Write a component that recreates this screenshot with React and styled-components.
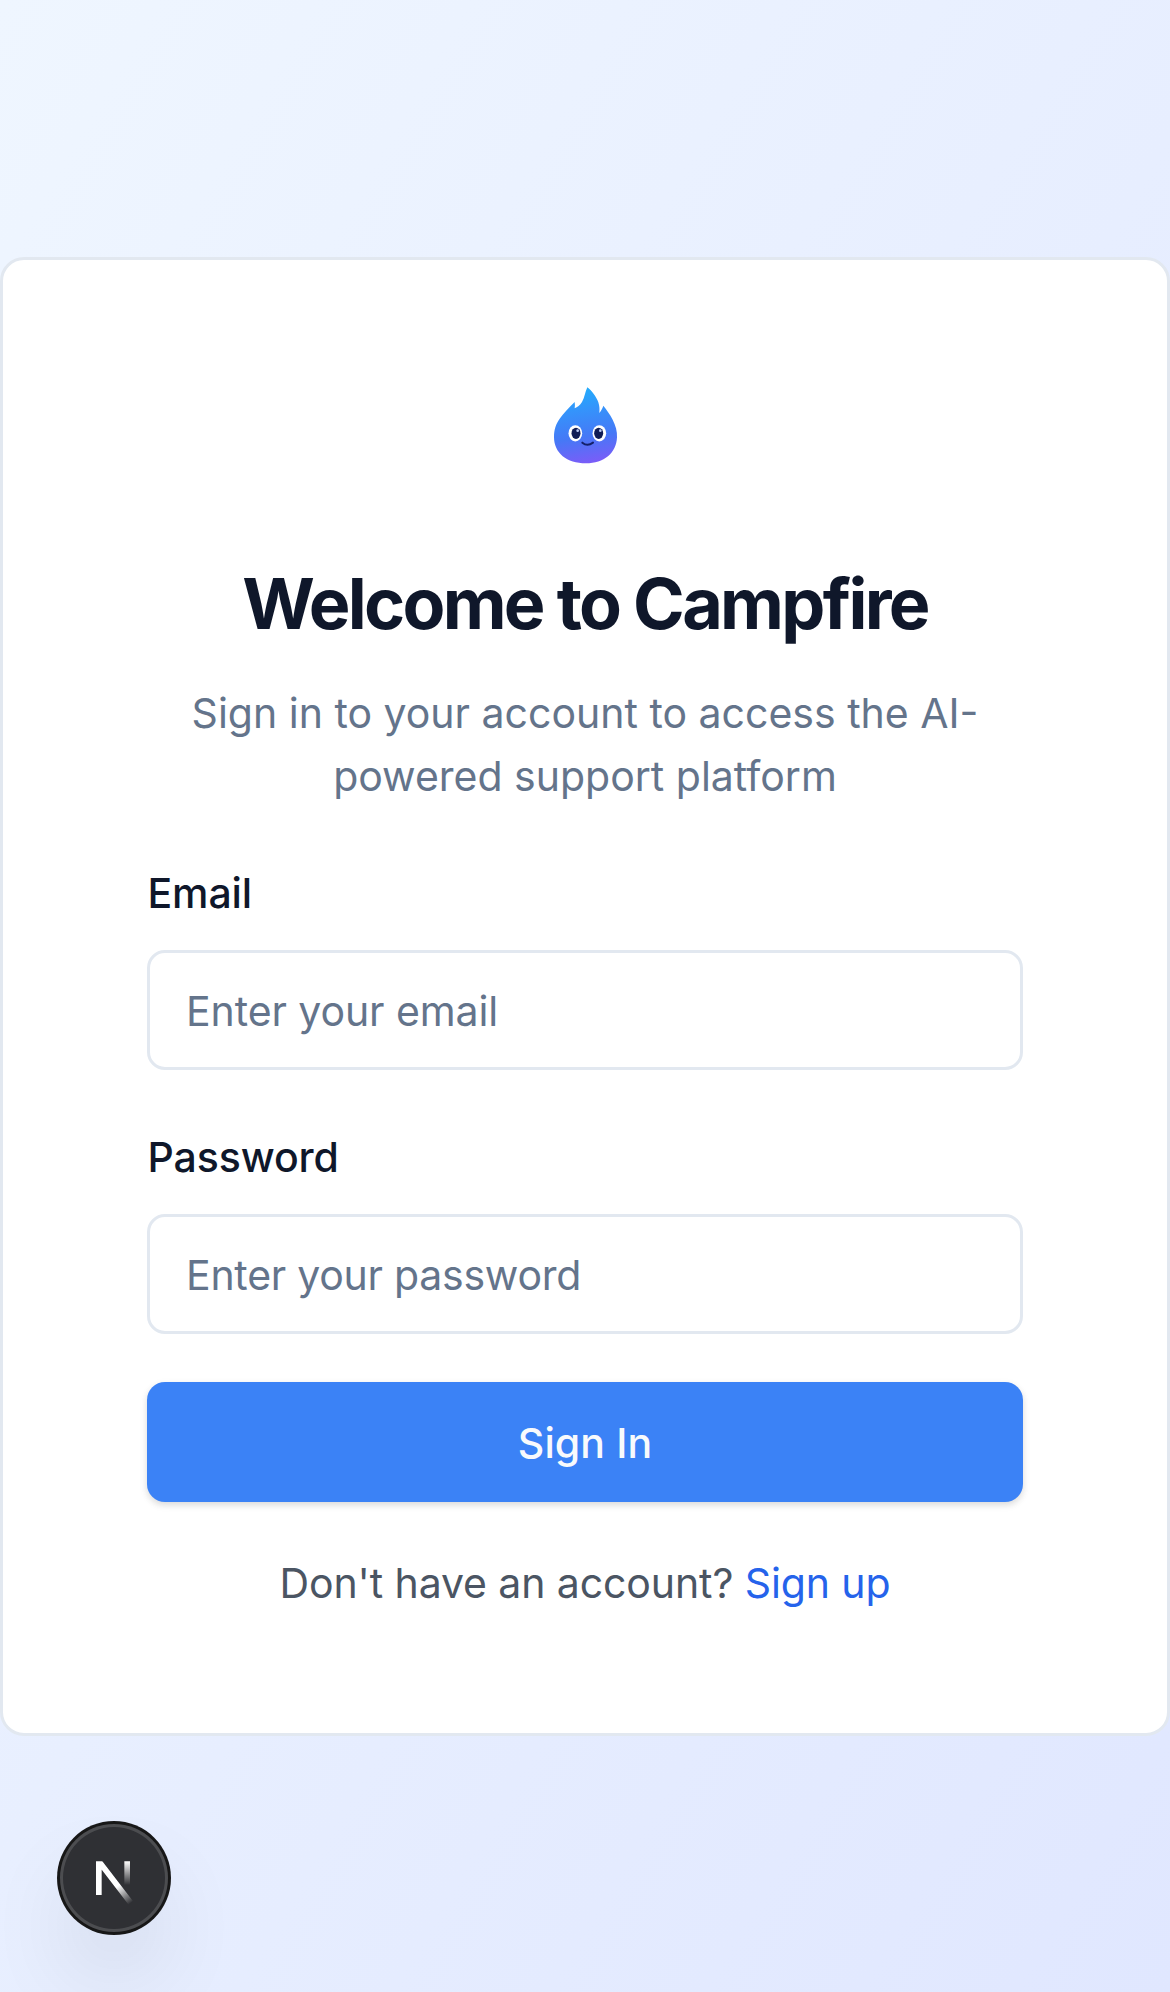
import React from 'react';
import styled, { createGlobalStyle } from 'styled-components';

const GlobalStyle = createGlobalStyle`
  *, *::before, *::after { box-sizing: border-box; }
  body {
    margin: 0;
    font-family: Inter, 'Liberation Sans', sans-serif;
    -webkit-font-smoothing: antialiased;
  }
`;

const Page = styled.main`
  position: relative;
  display: flex;
  align-items: flex-start;
  justify-content: center;
  height: 1992px;
  padding-top: 257px;
  overflow: hidden;
  background: linear-gradient(to bottom right, #eff6ff, #e0e7ff);
`;

const Card = styled.section`
  display: flex;
  flex-direction: column;
  width: 100%;
  height: 1479px;
  padding: 110px 144px 0;
  border: 3px solid #e2e8f0;
  border-radius: 24px;
  background: #fff;
`;

const Header = styled.header`
  display: flex;
  flex-direction: column;
  align-items: center;
  text-align: center;
`;

const Title = styled.h1`
  margin: 88px 0 42px;
  color: #0f172a;
  font-size: 70px;
  font-weight: 700;
  line-height: 72px;
  letter-spacing: -2.7px;
  white-space: nowrap;
`;

const Description = styled.p`
  margin: 0;
  color: #64748b;
  font-size: 41px;
  line-height: 63px;
`;

const Form = styled.form`
  display: flex;
  flex-direction: column;
  gap: 57px;
  margin-top: 55px;
`;

const Field = styled.div`
  display: flex;
  flex-direction: column;
  gap: 27px;
`;

const Label = styled.label`
  padding-left: 0.5px;
  color: #0f172a;
  font-size: 41px;
  font-weight: 500;
  line-height: 60px;
  letter-spacing: -0.1px;
`;

const Input = styled.input`
  width: 100%;
  height: 120px;
  padding: 2px 36px 0;
  border: 3px solid #e2e8f0;
  border-radius: 18px;
  outline: none;
  background: #fff;
  color: #0f172a;
  font-family: inherit;
  font-size: 41px;
  letter-spacing: ${(p) => p.$tracking || '0'};
  &::placeholder { color: #64748b; opacity: 1; }
`;

const SubmitButton = styled.button`
  height: 120px;
  margin-top: -9px;
  padding: 2px 0 0;
  border: 0;
  border-radius: 18px;
  background: #3b82f6;
  color: #f8fafc;
  font-family: inherit;
  font-size: 41px;
  font-weight: 500;
  letter-spacing: 0.1px;
  box-shadow: 0 3px 6px rgba(0, 0, 0, 0.08), 0 3px 9px rgba(0, 0, 0, 0.08);
`;

const Footer = styled.p`
  margin: 51px 0 0;
  color: #4b5563;
  font-size: 41px;
  line-height: 60px;
  letter-spacing: -0.1px;
  text-align: center;
  white-space: nowrap;
`;

const SignUpLink = styled.a`
  color: #2563eb;
  text-decoration: none;
`;

const DevBadge = styled.button`
  position: absolute;
  left: 60px;
  bottom: 60px;
  width: 108px;
  height: 108px;
  padding: 0;
  border: 0;
  border-radius: 50%;
  background: #2f3034;
  box-shadow: 0 0 0 3px #171717, inset 0 0 0 3px rgba(255, 255, 255, 0.14),
    0 48px 96px -24px rgba(0, 0, 0, 0.24);
  svg { display: block; }
`;

const FlameLogo = () => (
  <svg width="100" height="110" viewBox="0 0 300 330" aria-hidden="true">
    <defs>
      <linearGradient id="flame" x1="0.45" y1="0" x2="0.58" y2="1">
        <stop offset="0" stopColor="#22acfc" />
        <stop offset="0.3" stopColor="#3593fb" />
        <stop offset="0.65" stopColor="#4678f6" />
        <stop offset="1" stopColor="#7b5cf8" />
      </linearGradient>
    </defs>
    <path
      fill="url(#flame)"
      d="M157 52C169 60 184 80 190 97C194 109 194 119 193 129C199 121 203 114 205 107C214 118 225 133 233 149C242 167 247 184 246 202C244 250 207 280 153 280C95 280 57 249 57 201C57 178 63 161 74 146C86 129 103 112 119 96C120 103 120 109 119 115C127 111 135 106 141 96C149 83 150 67 157 52Z"
    />
    <ellipse cx="121" cy="190" rx="20.5" ry="24.5" fill="#fff" />
    <ellipse cx="193" cy="190" rx="20.5" ry="24.5" fill="#fff" />
    <ellipse cx="123" cy="190" rx="13.5" ry="17" fill="#101c56" />
    <ellipse cx="191" cy="190" rx="13.5" ry="17" fill="#101c56" />
    <circle cx="128" cy="182" r="4" fill="#b9c8f5" />
    <circle cx="196" cy="182" r="4" fill="#b9c8f5" />
    <path d="M142 218Q157 231 174 218" fill="none" stroke="#14206a" strokeWidth="6" strokeLinecap="round" />
  </svg>
);

const NextMark = () => (
  <svg width="108" height="108" viewBox="0 0 324 324" aria-hidden="true">
    <defs>
      <linearGradient id="diagonal" gradientUnits="userSpaceOnUse" x1="174" y1="186" x2="212" y2="238">
        <stop offset="0" stopColor="#fff" />
        <stop offset="1" stopColor="#fff" stopOpacity="0" />
      </linearGradient>
      <linearGradient id="stem" gradientUnits="userSpaceOnUse" x1="0" y1="112" x2="0" y2="183">
        <stop offset="0" stopColor="#fff" />
        <stop offset="1" stopColor="#fff" stopOpacity="0" />
      </linearGradient>
      <clipPath id="frame">
        <rect x="100" y="112" width="120" height="130" />
      </clipPath>
    </defs>
    <g clipPath="url(#frame)" fill="none" strokeWidth="17">
      <path d="M212 236L116.500 112V213" stroke="url(#diagonal)" />
      <path d="M201.500 110V213" stroke="url(#stem)" />
    </g>
  </svg>
);

export default function App() {
  return (
    <>
      <GlobalStyle />
      <Page>
        <Card>
          <Header>
            <FlameLogo />
            <Title>Welcome to Campfire</Title>
            <Description>
              Sign in to your account to access the AI-
              <br />
              powered support platform
            </Description>
          </Header>
          <Form onSubmit={(event) => event.preventDefault()}>
            <Field>
              <Label htmlFor="email">Email</Label>
              <Input id="email" type="email" placeholder="Enter your email" $tracking="-0.08px" />
            </Field>
            <Field>
              <Label htmlFor="password">Password</Label>
              <Input id="password" type="password" placeholder="Enter your password" $tracking="-0.25px" />
            </Field>
            <SubmitButton type="submit">Sign In</SubmitButton>
          </Form>
          <Footer>
            Don't have an account? <SignUpLink href="#">Sign up</SignUpLink>
          </Footer>
        </Card>
        <DevBadge type="button" aria-label="Open developer tools">
          <NextMark />
        </DevBadge>
      </Page>
    </>
  );
}
